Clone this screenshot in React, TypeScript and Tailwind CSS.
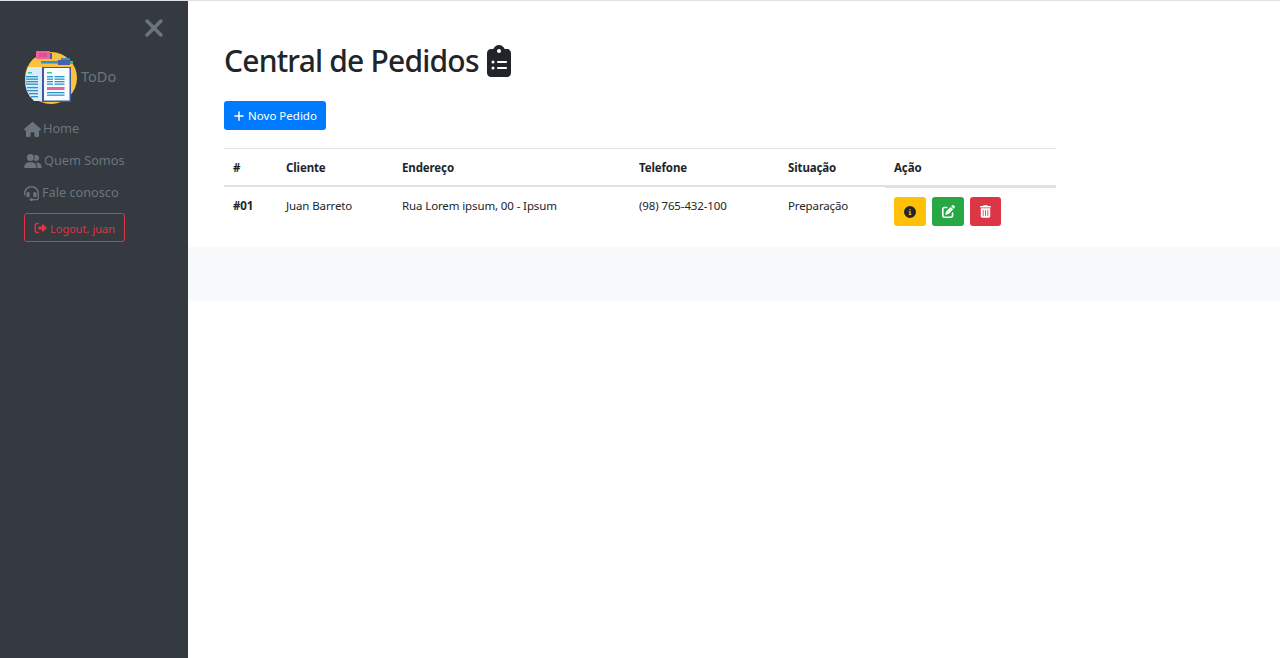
import {
  FaXmark,
  FaHouse,
  FaUserGroup,
  FaHeadset,
  FaRightFromBracket,
  FaPlus,
  FaClipboardList,
  FaCircleInfo,
  FaPenToSquare,
  FaTrashCan,
} from "react-icons/fa6";

function Logo() {
  return (
    <svg width="60" height="60" viewBox="0 0 60 60" className="shrink-0">
      <circle cx="30" cy="29" r="26" fill="#fcc13f" />
      <rect x="15" y="2" width="14" height="8" rx="1" fill="#f0609a" />
      <rect x="18" y="4" width="8" height="4" fill="#e0508c" />
      <rect x="29" y="4" width="2" height="6" fill="#3f5fa8" />
      <rect x="20" y="12" width="20" height="2.5" fill="#2b94c4" />
      <rect x="37" y="11" width="12" height="5" fill="#4a5fae" />
      <rect x="40" y="9" width="9" height="2" fill="#2b94c4" />
      <rect x="49" y="12" width="3" height="3" fill="#2fbf8f" />
      <path d="M7 18 H21 V52 H13 A26 26 0 0 1 4.5 29 Q5 23 7 18 Z" fill="#dcebfa" />
      <rect x="21" y="18" width="29" height="35" fill="#3b5aa5" />
      <rect x="23" y="19" width="25.5" height="32.5" fill="#f8fbff" />
      <rect x="7" y="23" width="4" height="1.5" fill="#3fc58d" />
      <rect x="26" y="23" width="5" height="1.5" fill="#3fc58d" />
      <rect x="5" y="27" width="12" height="1.3" fill="#2b94c4" />
      <rect x="5" y="29.5" width="12" height="1.3" fill="#2b94c4" />
      <rect x="5" y="32" width="12" height="1.3" fill="#2b94c4" />
      <rect x="5" y="34.5" width="12" height="1.3" fill="#2b94c4" />
      <rect x="6" y="38" width="11" height="1.3" fill="#2b94c4" />
      <rect x="6" y="41" width="11" height="1.3" fill="#2b94c4" />
      <rect x="8" y="44" width="9" height="1.3" fill="#2b94c4" />
      <rect x="10" y="47" width="7" height="1.3" fill="#2b94c4" />
      <rect x="26" y="27" width="6" height="1.3" fill="#2b94c4" />
      <rect x="26" y="29.5" width="6" height="1.3" fill="#2b94c4" />
      <rect x="26" y="32" width="6" height="1.3" fill="#2b94c4" />
      <rect x="26" y="34.5" width="6" height="1.3" fill="#2b94c4" />
      <rect x="33.5" y="27" width="10" height="1.3" fill="#2b94c4" />
      <rect x="33.5" y="29.5" width="10" height="1.3" fill="#2b94c4" />
      <rect x="33.5" y="32" width="10" height="1.3" fill="#2b94c4" />
      <rect x="33.5" y="34.5" width="10" height="1.3" fill="#2b94c4" />
      <rect x="26" y="38" width="17.5" height="3" fill="#f0609a" />
      <rect x="26" y="43" width="17.5" height="1.3" fill="#2b94c4" />
      <rect x="26" y="45.5" width="17.5" height="1.3" fill="#2b94c4" />
    </svg>
  );
}

function NavItem({ icon, label, gap }: { icon: React.ReactNode; label: string; gap: string }) {
  return (
    <a className={`flex items-center h-8 text-[12.8px] tracking-[-0.05px] text-[#6c757d] ${gap}`}>
      {icon}
      {label}
    </a>
  );
}

const headers = [
  { label: "#", width: "w-[53px]" },
  { label: "Cliente", width: "w-[116px]" },
  { label: "Endereço", width: "w-[237px]" },
  { label: "Telefone", width: "w-[149px]" },
  { label: "Situação", width: "w-[106px]" },
];

export default function App() {
  return (
    <div className="flex h-[658px] overflow-hidden border-t border-[#dee2e6] bg-white text-[#212529] font-['Noto_Sans',sans-serif]">
      <aside className="w-[188px] shrink-0 bg-[#343a40] flex flex-col pl-6">
        <div className="flex justify-end pr-[21px] pt-[13px]">
          <FaXmark className="text-[#6c757d] w-[26px] h-[28px]" />
        </div>
        <div className="flex items-center -ml-[3px] mt-[7px]">
          <Logo />
          <span className="text-[#6c757d] text-[14.5px] mt-[-4px]">ToDo</span>
        </div>
        <nav className="flex flex-col mt-[4px]">
          <NavItem icon={<FaHouse className="w-[17px] h-[15px]" />} label="Home" gap="gap-[2px]" />
          <NavItem icon={<FaUserGroup className="w-[18px] h-[14px]" />} label="Quem Somos" gap="gap-[2px]" />
          <NavItem icon={<FaHeadset className="w-[15px] h-[15px]" />} label="Fale conosco" gap="gap-[3px]" />
        </nav>
        <button className="mt-[4px] w-[101px] h-[29px] flex items-center justify-center gap-[3px] rounded-[3px] border border-[#dc3545] text-[#dc3545] text-[11px]">
          <FaRightFromBracket className="w-[13px] h-[12px]" />
          <span className="mt-[3px]">Logout, juan</span>
        </button>
      </aside>
      <main className="flex-1 flex flex-col">
        <div className="pl-9 pt-[37px]">
          <h1 className="flex items-center gap-2 text-[30px] tracking-[-0.8px] leading-[46px] font-medium">
            Central de Pedidos
            <FaClipboardList className="w-[24px] h-[32px]" />
          </h1>
          <button className="mt-[17px] w-[102px] h-[29px] flex items-center justify-center gap-[3px] rounded-[3px] bg-[#007bff] text-white text-[11.5px]">
            <FaPlus className="w-[12px] h-[12px]" />
            <span className="mt-[1px]">Novo Pedido</span>
          </button>
          <table className="mt-[18px] w-[832px] table-fixed border-separate border-spacing-0 text-[11.5px] tracking-[-0.12px]">
            <thead>
              <tr>
                {headers.map((h) => (
                  <th
                    key={h.label}
                    className={`${h.width} h-[39px] px-[9px] pt-[1px] text-left font-bold align-middle border-t border-b-2 border-[#dee2e6]`}
                  >
                    {h.label}
                  </th>
                ))}
                <th className="w-[171px] h-[39px] px-[9px] pt-[1px] text-left font-bold align-middle border-t border-b-2 border-[#dee2e6] shadow-[0_1px_0_#dee2e6]">
                  Ação
                </th>
              </tr>
            </thead>
            <tbody>
              <tr>
                <td className="px-[9px] pt-[10px] h-[60px] align-top font-bold">#01</td>
                <td className="px-[9px] pt-[10px] align-top">Juan Barreto</td>
                <td className="px-[9px] pt-[10px] align-top">Rua Lorem ipsum, 00 - Ipsum</td>
                <td className="px-[9px] pt-[10px] align-top">(98) 765-432-100</td>
                <td className="px-[9px] pt-[10px] align-top">Preparação</td>
                <td className="px-[9px] pt-[10px] align-top">
                  <div className="flex gap-[6px]">
                    <span className="w-8 h-[29px] flex items-center justify-center rounded-[3px] bg-[#ffc107] text-[#212529]">
                      <FaCircleInfo className="w-3 h-3" />
                    </span>
                    <span className="w-8 h-[29px] flex items-center justify-center rounded-[3px] bg-[#28a745] text-white">
                      <FaPenToSquare className="w-[13px] h-[13px]" />
                    </span>
                    <span className="w-[31px] h-[29px] flex items-center justify-center rounded-[3px] bg-[#dc3545] text-white">
                      <FaTrashCan className="w-[11px] h-[13px]" />
                    </span>
                  </div>
                </td>
              </tr>
            </tbody>
          </table>
        </div>
        <div className="h-[54px] bg-[#f8f9fa]" />
      </main>
    </div>
  );
}
